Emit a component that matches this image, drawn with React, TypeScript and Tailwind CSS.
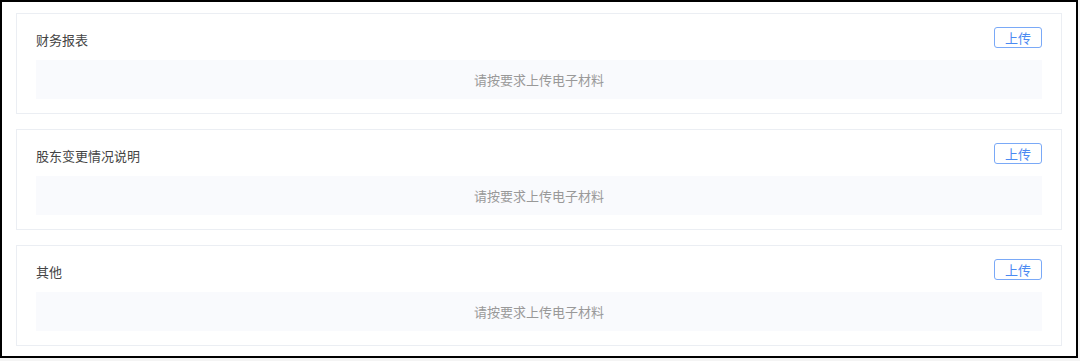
const sections = ['财务报表', '股东变更情况说明', '其他'];

function UploadCard({ title }: { title: string }) {
  return (
    <div className="border border-[#ebeef3] bg-white px-[19px] pt-[13px] pb-[14px]">
      <div className="flex items-start justify-between h-[21px]">
        <span className="mt-[4px] text-[13px] leading-[18px] text-[#444]">{title}</span>
        <button className="h-[21px] w-[48px] rounded-[3px] border border-[#7aa9f7] text-[13px] leading-[19px] text-[#4b8af2]">
          上传
        </button>
      </div>
      <div className="mt-[12px] h-[39px] bg-[#f9fafd] flex items-center justify-center text-[13px] text-[#999]">
        请按要求上传电子材料
      </div>
    </div>
  );
}

export default function App() {
  return (
    <div
      className="w-[1080px] h-[361px] bg-[#f4f4f4]"
      style={{ fontFamily: '"Noto Sans CJK SC", "Liberation Sans", sans-serif' }}
    >
      <div className="w-[1078px] h-[358px] border-2 border-black bg-white px-[14px] pt-[11px] flex flex-col gap-[15px]">
        {sections.map((s) => (
          <UploadCard key={s} title={s} />
        ))}
      </div>
    </div>
  );
}
